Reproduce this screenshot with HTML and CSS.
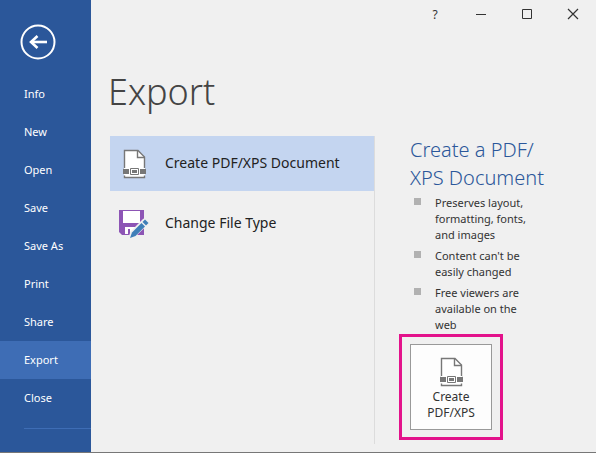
FILE: index.html
```html
<!DOCTYPE html>
<html lang="en">
<head>
    <meta charset="UTF-8">
    <meta name="viewport" content="width=device-width, initial-scale=1.0">
    <title>Export</title>
    <link rel="stylesheet" href="styles.css">
</head>
<body>
    <svg class="symbols" aria-hidden="true">
        <symbol id="pdf-icon" viewBox="0 0 24 30">
            <path d="M2.5 20V1.5H16L22.5 8V20" fill="#fff" stroke="#777" stroke-width="1.4"/>
            <path d="M2 19H23V28H2z" fill="#fff"/>
            <path d="M15.5 1.5V8.5H22.5" fill="none" stroke="#777" stroke-width="1.4"/>
            <path d="M2.5 26.5V28.5H22.5V26.5" fill="none" stroke="#777" stroke-width="1.4"/>
            <path d="M1 20H7V25H1zM18 20H24V25H18z" fill="#777"/>
            <path d="M8.5 19.5H16.5V25.5H8.5z" fill="#fff" stroke="#777"/>
            <path d="M10 21H15V24H10z" fill="#777"/>
        </symbol>
    </svg>
    <div class="app">
        <nav class="sidebar">
            <button type="button" class="back-btn" aria-label="Back">
                <svg width="36" height="36" viewBox="0 0 36 36" fill="none" stroke="#fff">
                    <circle cx="18" cy="18" r="16.5" stroke-width="2"/>
                    <path d="M27 18H11" stroke-width="2.6"/>
                    <path d="M17.5 12L11 18L17.5 24" stroke-width="2.6"/>
                </svg>
            </button>
            <a href="#">Info</a>
            <a href="#">New</a>
            <a href="#">Open</a>
            <a href="#">Save</a>
            <a href="#">Save As</a>
            <a href="#">Print</a>
            <a href="#">Share</a>
            <a href="#" class="active">Export</a>
            <a href="#">Close</a>
            <hr>
        </nav>
        <main class="main">
            <div class="window-buttons">
                <button type="button" aria-label="Help">?</button>
                <button type="button" aria-label="Minimize">
                    <svg width="12" height="12" viewBox="0 0 12 12"><path d="M1 6.5H11" stroke="#333"/></svg>
                </button>
                <button type="button" aria-label="Maximize">
                    <svg width="12" height="12" viewBox="0 0 12 12"><path d="M1.5 1.5H10.5V10.5H1.5z" fill="none" stroke="#333"/></svg>
                </button>
                <button type="button" aria-label="Close window">
                    <svg width="12" height="12" viewBox="0 0 12 12"><path d="M1 1L11 11M11 1L1 11" stroke="#333" stroke-width="1.2"/></svg>
                </button>
            </div>
            <h1>Export</h1>
            <div class="content">
                <div class="options">
                    <button type="button" class="option selected">
                        <svg width="30" height="30"><use href="#pdf-icon"/></svg>
                        <span>Create PDF/XPS Document</span>
                    </button>
                    <button type="button" class="option">
                        <svg width="30" height="30" viewBox="0 0 30 30">
                            <path d="M0 1H25V26H3L0 23z" fill="#8d55b5"/>
                            <path d="M4 2H21V14H4z" fill="#fff"/>
                            <path d="M6 18H18V25H11V20H9V25H6z" fill="#fff"/>
                            <path d="M9 30L11.5 22.5L24.5 9.5L30 14.5L17 27z" fill="#f0f0f0"/>
                            <path d="M11 29L13 23.5L22.5 14L26 17.5L16.5 27z" fill="#3f7fb8"/>
                            <path d="M23.5 13L26 10.5L29.5 14L27 16.5z" fill="#3f7fb8"/>
                        </svg>
                        <span>Change File Type</span>
                    </button>
                </div>
                <section class="details">
                    <h2>Create a PDF/<br>XPS Document</h2>
                    <ul>
                        <li>Preserves layout, formatting, fonts, and images</li>
                        <li>Content can't be easily changed</li>
                        <li>Free viewers are available on the web</li>
                    </ul>
                    <div class="highlight">
                        <button type="button" class="create-btn">
                            <svg width="24" height="30"><use href="#pdf-icon"/></svg>
                            <span>Create PDF/XPS</span>
                        </button>
                    </div>
                </section>
            </div>
        </main>
    </div>
</body>
</html>
```
FILE: styles.css
```css
*{
    box-sizing: border-box;
}
body{
    margin: 0;
    background-color: #f0f0f0;
    color: #333;
    font-family: "Noto Sans", "Open Sans", sans-serif;
    font-size: 11px;
}
button{
    border: none;
    background: none;
    padding: 0;
    color: inherit;
    font: inherit;
    cursor: pointer;
}
svg{
    display: block;
    flex: none;
}
.symbols{
    display: none;
}
.app{
    display: flex;
    min-height: 100vh;
    border-bottom: 1px solid #777;
}

/* sidebar */
.sidebar{
    display: flex;
    flex-direction: column;
    flex: none;
    width: 91px;
    background-color: #2b579a;
}
.back-btn{
    margin: 24px 0 15px 20px;
    align-self: flex-start;
}
.sidebar a{
    padding-left: 24px;
    line-height: 38px;
    color: #fff;
    text-decoration: none;
}
.sidebar a:hover,
.sidebar a.active{
    background-color: #3e6db5;
}
.sidebar hr{
    width: 67px;
    margin: 11px 0 0 24px;
    border: none;
    border-top: 1px solid #3e6db5;
}

/* main area */
.main{
    flex: 1;
    display: flex;
    flex-direction: column;
    padding-left: 19px;
}
.window-buttons{
    display: flex;
    justify-content: flex-end;
    height: 28px;
}
.window-buttons button{
    display: flex;
    align-items: center;
    justify-content: center;
    width: 46px;
    font-size: 12px;
}
h1{
    margin: 36px 0 16px -2px;
    color: #444;
    font-size: 36px;
    font-weight: 300;
    line-height: 56px;
}
.content{
    display: flex;
    flex: 1;
    padding-bottom: 8px;
}
.options{
    display: flex;
    flex-direction: column;
    gap: 5px;
    flex: 1;
    border-right: 1px solid #dcdcdc;
}
.option{
    display: flex;
    align-items: center;
    gap: 16px;
    height: 55px;
    padding-left: 9px;
    color: #222;
    font-size: 14px;
    text-align: left;
}
.option.selected{
    background-color: #c4d5f0;
}
.option span{
    flex: 1;
    padding-bottom: 2px;
}

/* details */
.details{
    width: 221px;
    padding-left: 35px;
}
h2{
    margin: 0;
    color: #2b579a;
    font-size: 20px;
    font-weight: 300;
    line-height: 28px;
}
.details ul{
    width: 125px;
    margin: 3px 0 0;
    padding: 0 0 0 4px;
    list-style: none;
}
.details li{
    display: flex;
    gap: 14px;
    line-height: 16px;
}
.details li + li{
    margin-top: 5px;
}
.details li::before{
    content: "";
    flex: none;
    width: 7px;
    height: 7px;
    margin-top: 3px;
    background-color: #b1b1b1;
}
.highlight{
    width: 104px;
    margin: 1px 0 0 -11px;
    padding: 7px 8px;
    border: 3px solid #e3128b;
}
.create-btn{
    display: flex;
    flex-direction: column;
    align-items: center;
    gap: 2px;
    width: 100%;
    padding: 12px 12px 8px;
    border: 1px solid #999;
    background-color: #fdfdfd;
    font-size: 12px;
    line-height: 16px;
}
```
